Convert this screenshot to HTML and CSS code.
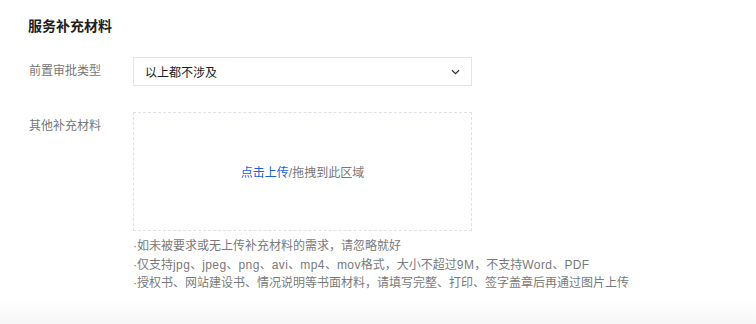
FILE: index.html
```html
<!DOCTYPE html>
<html lang="zh-CN">
<head>
  <meta charset="UTF-8" />
  <meta name="viewport" content="width=device-width, initial-scale=1.0" />
  <title>服务补充材料</title>
  <link rel="stylesheet" href="styles.css">
</head>
<body>
  <section class="card">
    <h2 class="card-title">服务补充材料</h2>

    <div class="form-row">
      <label class="form-label">前置审批类型</label>
      <div class="select">
        <span class="select-value">以上都不涉及</span>
        <svg class="select-arrow" width="9" height="6" viewBox="0 0 9 6">
          <path d="M1 1.2l3.5 3.5 3.5-3.5" fill="none" stroke="#333" stroke-width="1.3" />
        </svg>
      </div>
    </div>

    <div class="form-row form-row-upload">
      <label class="form-label">其他补充材料</label>
      <div class="upload-col">
        <div class="upload-box">
          <span><a class="upload-link">点击上传</a>/拖拽到此区域</span>
        </div>
        <ul class="tips">
          <li>·如未被要求或无上传补充材料的需求，请忽略就好</li>
          <li>·仅支持<span class="latin">jpg</span>、<span class="latin">jpeg</span>、<span class="latin">png</span>、<span class="latin">avi</span>、<span class="latin">mp4</span>、<span class="latin">mov</span>格式，大小不超过<span class="latin">9M</span>，不支持<span class="latin">Word</span>、<span class="latin">PDF</span></li>
          <li>·授权书、网站建设书、情况说明等书面材料，请填写完整、打印、签字盖章后再通过图片上传</li>
        </ul>
      </div>
    </div>
  </section>
  <div class="page-bottom"></div>
</body>
</html>
```

FILE: styles.css
```css
body {
  margin: 0;
  padding: 0;
  background-color: #fff;
  color: #333;
  font-family: "Liberation Sans", "Noto Sans CJK SC", sans-serif;
  font-size: 12px;
}

.card {
  height: 300px;
  padding: 16px 0 0 28px;
  box-sizing: border-box;
}

.card-title {
  margin: 0;
  font-size: 14px;
  line-height: 20px;
  font-weight: bold;
  color: #1f1f1f;
}

.form-row {
  display: flex;
  align-items: center;
  margin-top: 21px;
}

.form-row-upload {
  align-items: flex-start;
  margin-top: 26px;
}

.form-label {
  width: 104px;
  padding-left: 1px;
  color: #777;
  font-size: 12px;
  line-height: 29px;
}

.form-row-upload .form-label {
  line-height: 28px;
}

.select {
  width: 339px;
  height: 29px;
  box-sizing: border-box;
  border: 1px solid #e3e5eb;
  display: flex;
  align-items: center;
  justify-content: space-between;
  padding: 0 11px 0 11px;
}

.select-value {
  color: #222;
}

.select-arrow {
  display: block;
}

.upload-col {
  width: 339px;
}

.upload-box {
  height: 119px;
  box-sizing: border-box;
  border: 1px dashed #dfe1e8;
  display: flex;
  align-items: center;
  justify-content: center;
  color: #777;
}

.upload-link {
  color: #1a5fd9;
}

.tips {
  list-style: none;
  margin: 6px 0 0 0;
  padding: 0;
  width: 580px;
  color: #7a7a7a;
  line-height: 18.5px;
}

.latin {
  letter-spacing: 0.4px;
}

.page-bottom {
  height: 24px;
  background: linear-gradient(#fff, #f6f6f6);
}
```
